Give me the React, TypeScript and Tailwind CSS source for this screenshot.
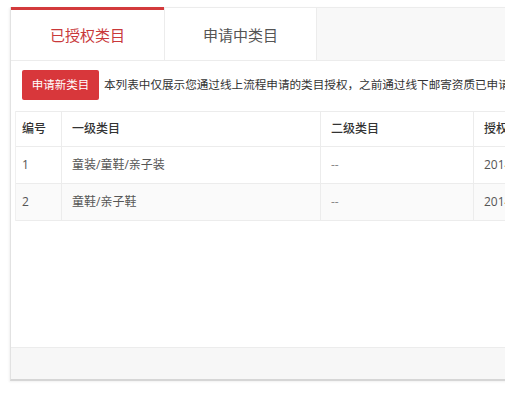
const rows = [
  { id: "1", first: "童装/童鞋/亲子装", second: "--", date: "2014-08-12" },
  { id: "2", first: "童鞋/亲子鞋", second: "--", date: "2014-08-12" },
];

const font = "font-['Open_Sans','Noto_Sans_CJK_SC',sans-serif]";

export default function App() {
  return (
    <div className={`h-[399px] w-[505px] overflow-hidden bg-white ${font}`}>
      <div className="ml-[10px] mt-[7px] flex h-[374px] w-[720px] flex-col border-b-2 border-l border-b-[#d6d6d6] border-l-[#e2e2e2] shadow-[-1px_1px_2px_rgba(0,0,0,0.06)]">
        {/* tabs */}
        <div className="flex h-[54px] border-b border-[#ececec]">
          <div className="flex w-[153px] items-center justify-center border-t-[3px] border-[#d33a3c] bg-white pt-[1px] text-[15px] text-[#c9383a]">
            已授权类目
          </div>
          <div className="flex w-[153px] items-center justify-center border-x border-t border-[#ececec] bg-white pt-[3px] text-[15px] text-[#555]">
            申请中类目
          </div>
          <div className="flex-1 border-t border-[#ececec] bg-[#f8f8f8]" />
        </div>

        {/* toolbar */}
        <div className="flex items-center pl-[11px] pt-[9px]">
          <button
            type="button"
            className="flex h-[30px] w-[77px] items-center justify-center rounded-[2px] bg-[#d8373b] text-[11.5px] text-white"
          >
            申请新类目
          </button>
          <span className="ml-[5px] whitespace-nowrap text-[11.6px] text-[#333]">
            本列表中仅展示您通过线上流程申请的类目授权，之前通过线下邮寄资质已申请的类目请联系小二
          </span>
        </div>

        {/* table */}
        <div className="ml-[4px] mt-[11px] border-l border-[#f0f0f0]">
          <div className="flex h-[36px] items-center border-y border-[#ececec] text-[12px] font-medium text-[#333]">
            <div className="w-[45px] pl-[6px]">编号</div>
            <div className="flex h-full w-[259px] items-center border-l border-[#ececec] pl-[10px]">一级类目</div>
            <div className="flex h-full w-[153px] items-center border-l border-[#ececec] pl-[10px]">二级类目</div>
            <div className="flex h-full flex-1 items-center border-l border-[#ececec] pl-[10px]">授权时间</div>
          </div>
          {rows.map((row, i) => (
            <div
              key={row.id}
              className={[
                "flex h-[37px] items-center border-b border-[#ececec] text-[12px] text-[#555]",
                i % 2 === 1 ? "bg-[#fafafa]" : "bg-white",
              ].join(" ")}
            >
              <div className="w-[45px] pl-[6px]">{row.id}</div>
              <div className="flex h-full w-[259px] items-center border-l border-[#ececec] pl-[10px]">{row.first}</div>
              <div className="flex h-full w-[153px] items-center border-l border-[#ececec] pl-[10px] text-[#888]">{row.second}</div>
              <div className="flex h-full flex-1 items-center border-l border-[#ececec] pl-[10px]">{row.date}</div>
            </div>
          ))}
        </div>

        <div className="flex-1" />

        {/* footer */}
        <div className="h-[32px] border-t border-[#ececec] bg-[#f7f7f7]" />
      </div>
    </div>
  );
}
